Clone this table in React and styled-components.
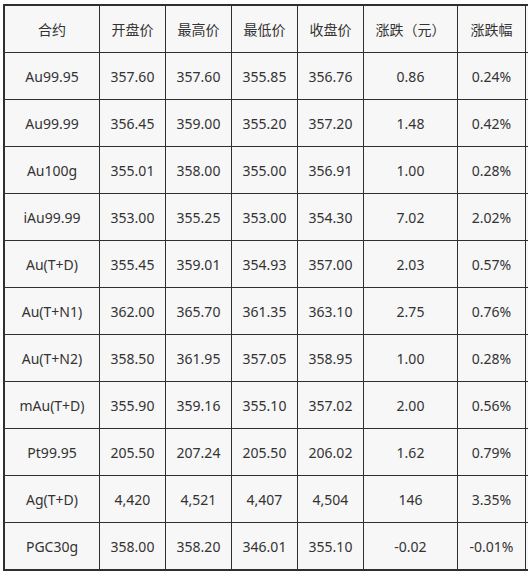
import styled, { createGlobalStyle } from "styled-components";

const GlobalStyle = createGlobalStyle`
  html, body {
    margin: 0;
    padding: 0;
    background: #ffffff;
    overflow: hidden;
  }
`;

const Page = styled.div`
  width: 528px;
  height: 576px;
  padding: 4px 0 0 3px;
  box-sizing: border-box;
  overflow: hidden;
`;

const Table = styled.table`
  border-collapse: separate;
  border-spacing: 0;
  border: 2px solid #2f2f2f;
  table-layout: fixed;
  width: 560px;
  background: #f7f7f7;
  font-family: "Noto Sans", "Noto Sans CJK SC", sans-serif;
  font-size: 14px;
  color: #333333;
`;

const Cell = styled.td`
  height: 46px;
  padding: 0;
  text-align: center;
  vertical-align: middle;
  white-space: nowrap;
  border-right: 1px solid #2f2f2f;
  border-bottom: ${(p) => (p.$last ? "none" : "1px solid #2f2f2f")};
`;

const HeadCell = styled(Cell).attrs({ as: "th" })`
  font-weight: normal;
  font-family: "Noto Sans CJK SC", sans-serif;
`;

const widths = [95, 66, 66, 66, 66, 94, 68];

const headers = ["合约", "开盘价", "最高价", "最低价", "收盘价", "涨跌（元）", "涨跌幅"];

const rows = [
  ["Au99.95", "357.60", "357.60", "355.85", "356.76", "0.86", "0.24%"],
  ["Au99.99", "356.45", "359.00", "355.20", "357.20", "1.48", "0.42%"],
  ["Au100g", "355.01", "358.00", "355.00", "356.91", "1.00", "0.28%"],
  ["iAu99.99", "353.00", "355.25", "353.00", "354.30", "7.02", "2.02%"],
  ["Au(T+D)", "355.45", "359.01", "354.93", "357.00", "2.03", "0.57%"],
  ["Au(T+N1)", "362.00", "365.70", "361.35", "363.10", "2.75", "0.76%"],
  ["Au(T+N2)", "358.50", "361.95", "357.05", "358.95", "1.00", "0.28%"],
  ["mAu(T+D)", "355.90", "359.16", "355.10", "357.02", "2.00", "0.56%"],
  ["Pt99.95", "205.50", "207.24", "205.50", "206.02", "1.62", "0.79%"],
  ["Ag(T+D)", "4,420", "4,521", "4,407", "4,504", "146", "3.35%"],
  ["PGC30g", "358.00", "358.20", "346.01", "355.10", "-0.02", "-0.01%"],
];

export default function App() {
  return (
    <Page>
      <GlobalStyle />
      <Table>
        <colgroup>
          {widths.map((w, i) => (
            <col key={i} style={{ width: w }} />
          ))}
          <col />
        </colgroup>
        <thead>
          <tr>
            {headers.map((h) => (
              <HeadCell key={h}>{h}</HeadCell>
            ))}
            <HeadCell />
          </tr>
        </thead>
        <tbody>
          {rows.map((r, ri) => (
            <tr key={r[0]}>
              {r.map((v, i) => (
                <Cell key={i} $last={ri === rows.length - 1}>
                  {v}
                </Cell>
              ))}
              <Cell $last={ri === rows.length - 1} />
            </tr>
          ))}
        </tbody>
      </Table>
    </Page>
  );
}
